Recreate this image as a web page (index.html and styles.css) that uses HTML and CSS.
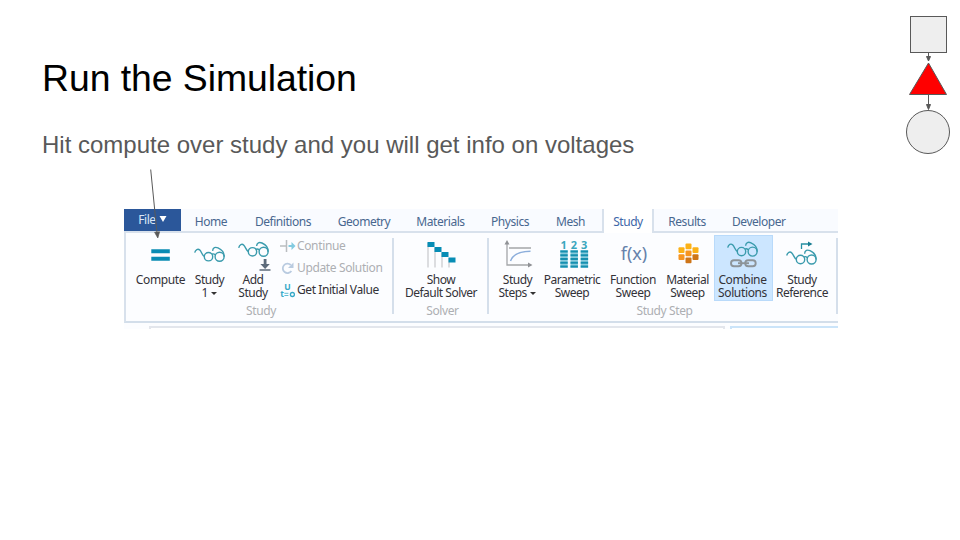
FILE: index.html
```html
<!DOCTYPE html>
<html lang="en">
<head>
<meta charset="utf-8">
<title>Run the Simulation</title>
<link rel="stylesheet" href="styles.css">
</head>
<body>
<svg class="defs" aria-hidden="true">
  <symbol id="glasses" viewBox="0 0 32 17" overflow="visible">
    <g fill="none" stroke="#3a9bad" stroke-width="1.4">
      <path d="M.7 7C1.4 3.8 4 2.6 5.8 4.4C7.8 6.500 8 9.600 10.400 10.700"/>
      <circle cx="14.500" cy="11" r="4.200"/><circle cx="25.600" cy="11" r="4.500"/>
      <path d="M17.800 8.500C19 7.800 20 8 21.400 9.100M18.600 5.200C18.800 1.800 21.300 1 24 2.200C28 4 30.300 7 30.100 11"/>
    </g>
  </symbol>
</svg>
<main class="slide">
  <h1>Run the Simulation</h1>
  <p class="lead">Hit compute over study and you will get info on voltages</p>

  <section class="ribbon">
    <nav class="tabs">
      <span class="file">File <svg width="8" height="6"><path d="M.5 0h7L4 6z" fill="#fff"/></svg></span>
      <span>Home</span><span>Definitions</span><span>Geometry</span><span>Materials</span><span>Physics</span><span>Mesh</span><span class="active">Study</span><span>Results</span><span>Developer</span>
    </nav>
    <div class="groups">
      <div class="group study">
        <div class="tools">
          <div class="tool"><svg viewBox="134 237 53 36"><path d="M151.300 249.200h18.500v4h-18.500zM151.300 256.700h18.500v4h-18.500z" fill="#0a8cb4"/></svg><span class="wide">Compute</span></div>
          <div class="tool"><svg viewBox="187 237 45 36"><use href="#glasses" x="194" y="245.700" width="32" height="17"/></svg><span>Study<br>1 <i class="caret"></i></span></div>
          <div class="tool add"><svg viewBox="232 237 44 36"><use href="#glasses" x="238" y="240.800" width="32" height="17"/><path d="M263.700 259h2.800v5h3.300l-4.700 5-4.700-5h3.300zM259.500 269.300h11v1.500h-11z" fill="#5d6b7b"/></svg><span>Add<br>Study</span></div>
          <div class="small-tools">
            <div class="off"><svg viewBox="280 237 17 17"><path d="M280 246h7M286.500 240v12" stroke="#b9bdc0" stroke-width="1.500"/><path d="M288.500 245h3v-3l4 4-4 4v-3h-3z" fill="#83cbe0"/></svg><span class="wide">Continue</span></div>
            <div class="off"><svg viewBox="280 259 17 17"><path d="M290.800 265a4.700 4.700 0 1 0 .6 6" fill="none" stroke="#b9cbe0" stroke-width="1.800"/><path d="M293.500 262.500v5.500h-5.500z" fill="#b9cbe0"/></svg><span class="wide">Update Solution</span></div>
            <div><svg viewBox="280 281 17 17"><text x="287.200" y="290" text-anchor="middle" class="u">U</text><text x="280.300" y="297.400" class="u">t</text><path d="M284.400 293.300h4M284.400 295.500h4" stroke="#61bdd3"/><circle cx="292.400" cy="294.500" r="2" fill="none" stroke="#36a9c7" stroke-width="1.300"/></svg><span class="initial">Get Initial Value</span></div>
          </div>
        </div>
        <div class="caption">Study</div>
      </div>
      <div class="group solver">
        <div class="tools">
          <div class="tool"><svg viewBox="394 237 94 36"><path d="M428 243v24.500M435 248v19.500M442 253v14.500M449 258v9.500" stroke="#cbcdd0" stroke-width="1.300"/><path d="M427.500 242h7v5h-7zM434.500 247h7v5h-7zM441.500 252h7v5h-7zM448.500 257.500h7v5h-7z" fill="#078db5"/></svg><span>Show<br>Default Solver</span></div>
        </div>
        <div class="caption">Solver</div>
      </div>
      <div class="group step">
        <div class="tools">
          <div class="tool"><svg viewBox="494 237 48 36"><path d="M507 243v22h24M509 248h22" fill="none" stroke="#a4a6a9" stroke-width="1.300"/><path d="M504.500 244.500l2.500-4.500 2.500 4.500zM528 262.500l4.500 2.500-4.500 2.500z" fill="#909296"/><path d="M510.500 261c2-6 7-9.500 20-9.700" fill="none" stroke="#8caedb" stroke-width="1.500"/></svg><span class="steps">Study<br>Steps <i class="caret"></i></span></div>
          <div class="tool"><svg viewBox="542 237 60 36"><g class="num"><text x="563.700" y="249">1</text><text x="574" y="249">2</text><text x="584.200" y="249">3</text></g><path d="M560.300 250h7.400v18h-7.400zM570.500 250h7.400v18h-7.400zM580.700 250h7.400v18h-7.400z" fill="#88cbdc"/><path d="M564 250.500v18M574.200 250.500v18M584.400 250.500v18" stroke="#168faf" stroke-width="7.400" stroke-dasharray="2 1.750"/></svg><span>Parametric<br>Sweep</span></div>
          <div class="tool"><svg viewBox="602 237 62 36"><text x="634" y="259.800" text-anchor="middle" class="fx">f(x)</text></svg><span class="wide">Function<br>Sweep</span></div>
          <div class="tool material"><svg viewBox="664 237 47 36"><g fill="#fbb117"><rect x="685.500" y="243.500" width="6" height="5.800" rx="1"/><rect x="678.500" y="247.300" width="6" height="5.800" rx="1"/><rect x="692.500" y="247.300" width="6" height="5.800" rx="1"/></g><g fill="#f7941f"><rect x="685.500" y="250.500" width="6" height="5.800" rx="1"/><rect x="678.500" y="254.200" width="6" height="5.800" rx="1"/></g><g fill="#ce7518"><rect x="692.500" y="254.200" width="6" height="5.800" rx="1"/><rect x="685.500" y="257.500" width="6" height="5.800" rx="1"/></g></svg><span>Material<br>Sweep</span></div>
          <div class="tool selected"><svg viewBox="714 237 59 36"><use href="#glasses" x="727" y="240.600" width="32" height="17"/><g fill="none" stroke="#8d9499" stroke-width="1.900"><rect x="731" y="260.200" width="10.500" height="6" rx="3"/><rect x="745.200" y="260.200" width="10.500" height="6" rx="3"/><path d="M738 263.200h11"/></g></svg><span class="wide">Combine<br>Solutions</span></div>
          <div class="tool"><svg viewBox="773 237 58 36"><use href="#glasses" x="786" y="248.500" width="32" height="17"/><path d="M801.500 249v-5h7" fill="none" stroke="#258fa3" stroke-width="1.300"/><path d="M808 241.500l4.500 2.500-4.500 2.500z" fill="#187d92"/></svg><span>Study<br>Reference</span></div>
        </div>
        <div class="caption">Study Step</div>
      </div>
    </div>
    <div class="panels"><div></div><div class="blue"></div></div>
  </section>

  <svg class="pointer" viewBox="145 165 20 76"><path d="M150.700 169.500L157 233" stroke="#595959" stroke-width="1" fill="none"/><path d="M154.600 232.300l5-.5-1.800 6.200z" fill="#595959" stroke="#595959" stroke-width=".7"/></svg>
  <svg class="flow" viewBox="900 10 56 150"><g fill="#eee" stroke="#595959"><rect x="910.500" y="16.500" width="36" height="36"/><circle cx="928" cy="132" r="21.500"/></g><path d="M928.500 63L946.500 94.500H909.500Z" fill="red" stroke="#595959"/><path d="M928.500 52.500v5M928.500 94.500v11" stroke="#595959"/><path d="M926.500 56.500h4l-2 4.500zM926.500 104.500h4l-2 5z" fill="#595959" stroke="#595959"/></svg>
</main>
</body>
</html>
```
FILE: styles.css
```css
* { box-sizing: border-box; }
body { margin: 0; background: #fff; }
.defs { position: absolute; width: 0; height: 0; }
.slide {
  position: relative;
  width: 960px;
  height: 540px;
  overflow: hidden;
  padding: 57px 0 0 42px;
  font-family: "Liberation Sans", Arial, sans-serif;
}
h1 { margin: 0; font-size: 37.33px; line-height: 43px; font-weight: 400; letter-spacing: -.04px; color: #000; }
.lead { margin: 31px 0 0; font-size: 24px; line-height: 28px; color: #595959; }

.ribbon {
  width: 714px;
  height: 120px;
  margin: 50px 0 0 82px;
  overflow: hidden;
  background: #fcfdff;
  color: #333238;
  font: 12px/13px "Noto Sans", "Open Sans", sans-serif;
  letter-spacing: -.5px;
}
.ribbon svg { display: block; flex: none; }
.tabs {
  display: grid;
  grid-template-columns: 57px 60px 84px 78px 75px 64px 60px 52px 66px 1fr;
  height: 24px;
  color: #48678f;
  background: #f9fbff;
  letter-spacing: -.45px;
}
.tabs span { display: flex; align-items: center; justify-content: center; padding-top: 3px; border-bottom: 2px solid #d8e1ec; }
.tabs span:last-child { justify-content: flex-start; padding-left: 12px; }
.tabs span:nth-child(7) { padding-right: 3px; }
.tabs .file { background: #2b579a; color: #dce6f5; gap: 3px; padding: 0 0 2px; border-bottom: 2px solid #d8e1ec; }
.tabs .active { background: #fff; color: #3e66a8; border: 2px solid #d8e1ec; border-width: 0 2px; padding-bottom: 2px; }

.groups { display: flex; height: 90px; border-left: 2px solid #d8e1ec; border-bottom: 2px solid #d3deea; }
.group { display: flex; flex-direction: column; position: relative; height: 88px; padding-top: 2px; }
.group::after { content: ""; position: absolute; right: 0; top: 5px; width: 2px; height: 76px; background: #d5dfeb; }
.study { width: 268px; padding-left: 8px; }
.solver { width: 95px; }
.step { width: 349px; padding-left: 5px; }
.tools { display: flex; height: 67px; }
.tool { display: flex; flex-direction: column; height: 66px; text-align: center; white-space: nowrap; }
.tool span { align-self: center; }
.wide { letter-spacing: -.36px; }
.initial { letter-spacing: -.42px; }
.tool svg { height: 36px; margin-top: 2px; }
.study .tool:nth-child(1) svg { width: 53px; }
.study .tool:nth-child(2) svg { width: 45px; }
.study .tool:nth-child(3) svg { width: 44px; }
.solver .tool svg { width: 94px; }
.step .tool:nth-child(1) svg { width: 48px; }
.step .tool:nth-child(2) svg { width: 60px; }
.step .tool:nth-child(3) svg { width: 62px; }
.step .tool:nth-child(4) svg { width: 47px; }
.step .tool:nth-child(5) svg { width: 59px; }
.step .tool:nth-child(6) svg { width: 58px; }
.step .steps { padding-right: 1px; }
.step .material { margin-right: 3px; }
.selected { background: #cce6ff; box-shadow: inset 0 0 0 1px #b9dafa; }
.selected span, .add span { padding-right: 2px; }
.caret { display: inline-block; margin-left: 1px; border: 3px solid transparent; border-top-color: #333; border-bottom: 0; vertical-align: 2px; }
.small-tools { display: flex; flex-direction: column; gap: 5px; padding: 2px 0 0 4px; }
.small-tools div { display: flex; align-items: center; height: 17px; white-space: nowrap; }
.small-tools span { margin-top: -1px; }
.small-tools svg { width: 17px; height: 17px; }
.off, .caption { color: #adafb3; }
.caption { text-align: center; padding-top: 2px; letter-spacing: -.4px; }
.study .caption { padding-right: 6px; }
.solver .caption { padding-left: 2px; }
.step .caption { padding-right: 3px; }
.u { font: bold 8.5px "Open Sans", sans-serif; fill: #36a9c7; }
.num { font: bold 11px "Open Sans", sans-serif; fill: #3aa6bd; text-anchor: middle; letter-spacing: 0; }
.fx { font: 18px "Noto Sans", sans-serif; fill: #6682ab; letter-spacing: 0; }
.panels { display: flex; gap: 5px; height: 6px; padding: 3px 0 0 25px; }
.panels div { flex: none; width: 576px; height: 8px; border: 2px solid #e3e6ec; background: #fff; }
.panels .blue { width: 120px; border-color: #cbe4f9; }

.pointer { position: absolute; left: 145px; top: 165px; width: 20px; height: 76px; }
.flow { position: absolute; left: 900px; top: 10px; width: 56px; height: 150px; }
```
